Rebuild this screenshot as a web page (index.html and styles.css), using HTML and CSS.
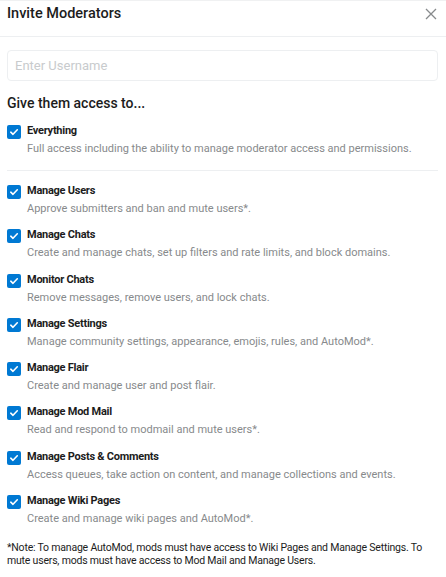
FILE: index.html
```html
<!DOCTYPE html>
<html>
<head>
<meta charset="utf-8">
<link rel="stylesheet" href="styles.css">
</head>
<body>
<div class="modal">
  <div class="header">
    <h1 class="title">Invite Moderators</h1>
    <button class="close" aria-label="Close">
      <svg width="12" height="12" viewBox="0 0 12 12"><path d="M1 1 L11 11 M11 1 L1 11" stroke="#878a8c" stroke-width="1.3" fill="none"/></svg>
    </button>
  </div>
  <div class="body">
    <input class="username" type="text" placeholder="Enter Username">
    <h2 class="subtitle">Give them access to...</h2>
    <div class="perm everything">
      <span class="check"><svg width="10" height="10" viewBox="0 0 10 10"><path d="M1.8 5.2 L4 7.3 L8.3 2.8" stroke="#fff" stroke-width="1.6" fill="none" stroke-linecap="round" stroke-linejoin="round"/></svg></span>
      <div class="text"><div class="label">Everything</div><div class="desc">Full access including the ability to manage moderator access and permissions.</div></div>
    </div>
    <div class="divider"></div>
    <div class="perm">
      <span class="check"><svg width="10" height="10" viewBox="0 0 10 10"><path d="M1.8 5.2 L4 7.3 L8.3 2.8" stroke="#fff" stroke-width="1.6" fill="none" stroke-linecap="round" stroke-linejoin="round"/></svg></span>
      <div class="text"><div class="label">Manage Users</div><div class="desc">Approve submitters and ban and mute users*.</div></div>
    </div>
    <div class="perm">
      <span class="check"><svg width="10" height="10" viewBox="0 0 10 10"><path d="M1.8 5.2 L4 7.3 L8.3 2.8" stroke="#fff" stroke-width="1.6" fill="none" stroke-linecap="round" stroke-linejoin="round"/></svg></span>
      <div class="text"><div class="label">Manage Chats</div><div class="desc">Create and manage chats, set up filters and rate limits, and block domains.</div></div>
    </div>
    <div class="perm">
      <span class="check"><svg width="10" height="10" viewBox="0 0 10 10"><path d="M1.8 5.2 L4 7.3 L8.3 2.8" stroke="#fff" stroke-width="1.6" fill="none" stroke-linecap="round" stroke-linejoin="round"/></svg></span>
      <div class="text"><div class="label">Monitor Chats</div><div class="desc">Remove messages, remove users, and lock chats.</div></div>
    </div>
    <div class="perm">
      <span class="check"><svg width="10" height="10" viewBox="0 0 10 10"><path d="M1.8 5.2 L4 7.3 L8.3 2.8" stroke="#fff" stroke-width="1.6" fill="none" stroke-linecap="round" stroke-linejoin="round"/></svg></span>
      <div class="text"><div class="label">Manage Settings</div><div class="desc">Manage community settings, appearance, emojis, rules, and AutoMod*.</div></div>
    </div>
    <div class="perm">
      <span class="check"><svg width="10" height="10" viewBox="0 0 10 10"><path d="M1.8 5.2 L4 7.3 L8.3 2.8" stroke="#fff" stroke-width="1.6" fill="none" stroke-linecap="round" stroke-linejoin="round"/></svg></span>
      <div class="text"><div class="label">Manage Flair</div><div class="desc">Create and manage user and post flair.</div></div>
    </div>
    <div class="perm">
      <span class="check"><svg width="10" height="10" viewBox="0 0 10 10"><path d="M1.8 5.2 L4 7.3 L8.3 2.8" stroke="#fff" stroke-width="1.6" fill="none" stroke-linecap="round" stroke-linejoin="round"/></svg></span>
      <div class="text"><div class="label">Manage Mod Mail</div><div class="desc">Read and respond to modmail and mute users*.</div></div>
    </div>
    <div class="perm">
      <span class="check"><svg width="10" height="10" viewBox="0 0 10 10"><path d="M1.8 5.2 L4 7.3 L8.3 2.8" stroke="#fff" stroke-width="1.6" fill="none" stroke-linecap="round" stroke-linejoin="round"/></svg></span>
      <div class="text"><div class="label">Manage Posts &amp; Comments</div><div class="desc">Access queues, take action on content, and manage collections and events.</div></div>
    </div>
    <div class="perm">
      <span class="check"><svg width="10" height="10" viewBox="0 0 10 10"><path d="M1.8 5.2 L4 7.3 L8.3 2.8" stroke="#fff" stroke-width="1.6" fill="none" stroke-linecap="round" stroke-linejoin="round"/></svg></span>
      <div class="text"><div class="label">Manage Wiki Pages</div><div class="desc">Create and manage wiki pages and AutoMod*.</div></div>
    </div>
    <p class="note">*Note: To manage AutoMod, mods must have access to Wiki Pages and Manage Settings. To mute users, mods must have access to Mod Mail and Manage Users.</p>
  </div>
</div>
</body>
</html>
```
FILE: styles.css
```css
* { box-sizing: border-box; }
html, body { margin: 0; padding: 0; background: #fff; }
body { font-family: Roboto, "Noto Sans", sans-serif; color: #1c1c1c; }
.modal { width: 446px; border-top: 1px solid #f0f1f2; }
.header {
  display: flex; justify-content: space-between; align-items: flex-start;
  padding: 3px 7px 12px 7px;
  border-bottom: 1px solid #edeff1;
}
.title { margin: 0; font-size: 14.5px; line-height: 20px; font-weight: 500; color: #1c1c1c; }
.close { border: 0; background: none; padding: 0; margin: 4px 2px 0 0; width: 12px; height: 12px; display: flex; }
.body { padding: 13px 8px 0 7px; }
.username {
  display: block; width: 100%; height: 31px;
  border: 1px solid #edeff1; border-radius: 4px;
  padding: 0 7px; font: 13px Roboto, "Noto Sans", sans-serif; color: #1c1c1c; outline: none;
}
.username::placeholder { color: #c8cbcd; }
.subtitle { margin: 12px 0 10px; font-size: 14px; line-height: 20px; font-weight: 500; }
.perm { display: flex; gap: 6px; margin-bottom: 10.3px; }
.check {
  flex: none; width: 14px; height: 14px; margin-top: 2px;
  background: #0079d3; border-radius: 2px;
  display: flex; align-items: center; justify-content: center;
}
.label { font-size: 11px; line-height: 16px; font-weight: 700; color: #1c1c1c; letter-spacing: -0.25px; }
.desc { margin-top: 2px; font-size: 11px; line-height: 16px; color: #878a8c; }
.everything { margin-bottom: 13px; }
.divider { height: 1px; background: #edeff1; margin-bottom: 12px; }
.note { margin: 13.5px 0 0; font-size: 10.5px; line-height: 13px; color: #1c1c1c; letter-spacing: -0.2px; }
```
